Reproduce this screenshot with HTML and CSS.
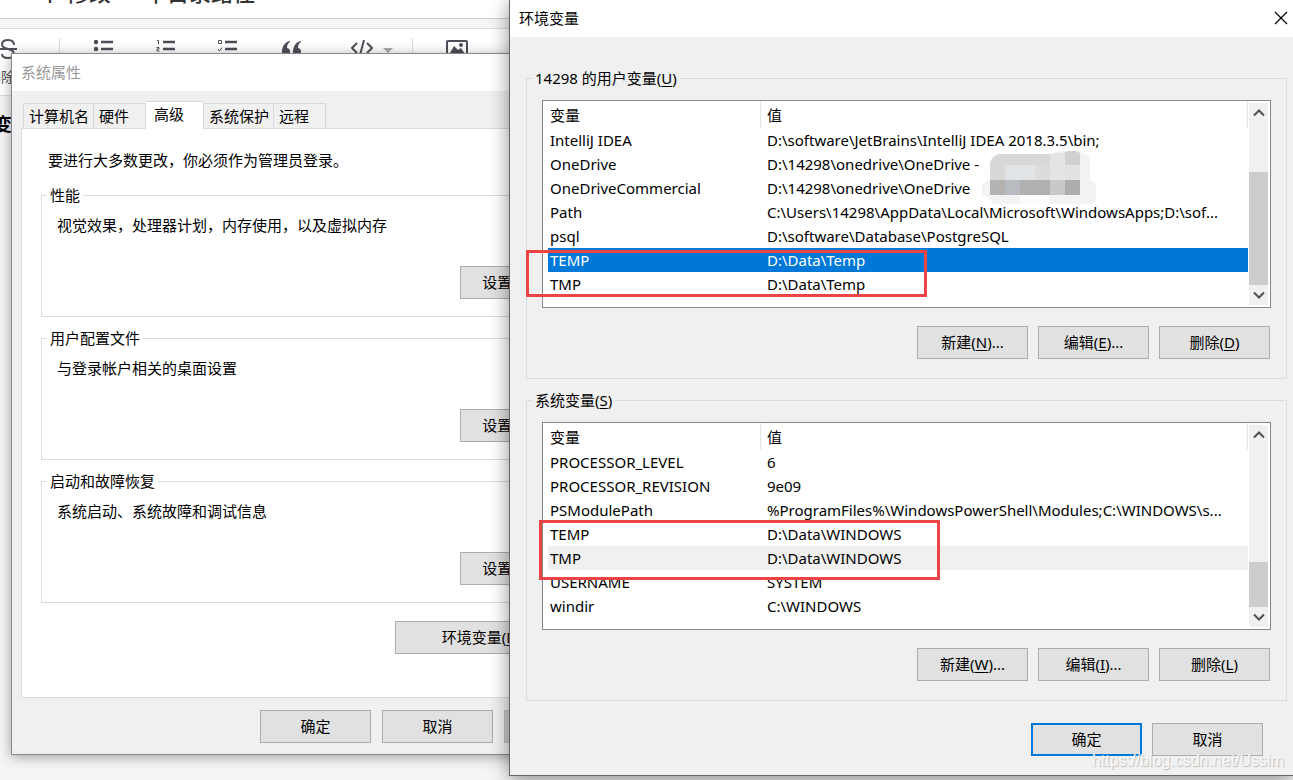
FILE: index.html
```html
<!DOCTYPE html>
<html lang="zh-CN">
<head>
  <meta charset="UTF-8">
  <meta name="viewport" content="width=device-width, initial-scale=1">
  <title>环境变量</title>
  <link rel="stylesheet" href="styles.css">
</head>
<body>
  <div class="editor">
    <div class="editor-title"><h1>个 修改 &nbsp; &nbsp; &nbsp;中目录路径</h1></div>
    <div class="toolbar">
      <button class="tool tool-first">
        <svg width="22" height="22" viewBox="0 0 22 22" fill="none" stroke="#4f4f5a" stroke-width="2"><path d="M17 6c0-3-2-5-6-5S5 3 5 5.500s2 3.500 6 4.500 6 2.500 6 5-2 4-6 4-6-1-6-4M2 10h18"/></svg>
        <span>删除线</span>
      </button>
      <i class="tool-line"></i>
      <button class="tool" aria-label="无序列表">
        <svg width="22" height="22" viewBox="0 0 22 22" stroke="#4f4f5a" stroke-width="2"><path d="M8 3h12M8 10h12M8 17h12" stroke-width="2.500"/><circle cx="3" cy="3" r="1.200"/><circle cx="3" cy="10" r="1.200"/><circle cx="3" cy="17" r="1.200"/></svg>
      </button>
      <button class="tool" aria-label="有序列表">
        <svg width="22" height="22" viewBox="0 0 22 22" fill="none" stroke="#4f4f5a"><path d="M8 3h12M8 10h12M8 17h12" stroke-width="2.500"/><path d="M2 1.500h1.500V5M1.500 8.500h2.500v1.500H2v2h2.500"/></svg>
      </button>
      <button class="tool" aria-label="待办">
        <svg width="22" height="22" viewBox="0 0 22 22" fill="none" stroke="#4f4f5a"><path d="M8 3h12M8 10h12M8 17h12" stroke-width="2.500"/><path d="M1.500 1.500h3v3h-3zM1 10l1.500 2L5 8.500"/></svg>
      </button>
      <button class="tool tool-wide" aria-label="引用">
        <svg width="22" height="22" viewBox="0 0 22 22" fill="#4f4f5a"><path d="M9 2C4 3 1 7 1 13a4 4 0 1 0 5-4C6 6 7 4 9 3zM20 2c-5 1-8 5-8 11a4 4 0 1 0 5-4c0-3 1-5 3-6z"/></svg>
      </button>
      <button class="tool tool-code" aria-label="代码段">
        <svg width="22" height="22" viewBox="0 0 22 22" fill="none" stroke="#4f4f5a" stroke-width="2"><path d="M6 4L1 9l5 5M16 4l5 5-5 5M13 1L9 16"/></svg>
        <svg width="10" height="22" viewBox="0 0 10 22" fill="#aaa"><path d="M0 9h10l-5 5z"/></svg>
      </button>
      <i class="tool-line"></i>
      <button class="tool tool-wide tool-image" aria-label="图片">
        <svg width="22" height="22" viewBox="0 0 22 22" fill="none" stroke="#4f4f5a" stroke-width="2"><rect x="1" y="2" width="20" height="17" rx="1"/><path d="M4 14l4-7 4 4 3-2 4 6H4z" fill="#4f4f5a" stroke="none"/><circle cx="15" cy="6" r="1"/></svg>
      </button>
    </div>
    <p class="editor-heading">变</p>
  </div>

  <!-- 系统属性 -->
  <div class="window sys-window">
    <div class="title-bar">系统属性</div>
    <div class="sys-body">
      <div class="tabs">
        <button class="tab">计算机名</button>
        <button class="tab">硬件</button>
        <button class="tab active">高级</button>
        <button class="tab">系统保护</button>
        <button class="tab">远程</button>
      </div>
      <div class="tab-page">
        <p class="notice">要进行大多数更改，你必须作为管理员登录。</p>
        <fieldset class="group">
          <legend>性能</legend>
          <p>视觉效果，处理器计划，内存使用，以及虚拟内存</p>
          <button class="btn">设置(<u>S</u>)...</button>
        </fieldset>
        <fieldset class="group">
          <legend>用户配置文件</legend>
          <p>与登录帐户相关的桌面设置</p>
          <button class="btn">设置(<u>E</u>)...</button>
        </fieldset>
        <fieldset class="group">
          <legend>启动和故障恢复</legend>
          <p>系统启动、系统故障和调试信息</p>
          <button class="btn">设置(<u>T</u>)...</button>
        </fieldset>
        <button class="btn btn-env">环境变量(<u>N</u>)...</button>
      </div>
      <div class="sys-footer">
        <button class="btn">确定</button>
        <button class="btn">取消</button>
        <button class="btn" disabled>应用(<u>A</u>)</button>
      </div>
    </div>
  </div>

  <!-- 环境变量 -->
  <div class="window env-window">
    <div class="title-bar">
      <span>环境变量</span>
      <button class="close" aria-label="关闭">
        <svg width="14" height="14" viewBox="0 0 14 14" stroke="#000" stroke-width="1.200"><path d="M1 1l12 12M13 1L1 13"/></svg>
      </button>
    </div>
    <div class="env-body">
      <fieldset class="group var-group">
        <legend>14298 的用户变量(<u>U</u>)</legend>
        <div class="list">
          <table>
            <thead>
              <tr><th class="name">变量</th><th>值</th></tr>
            </thead>
            <tbody>
              <tr><td>IntelliJ IDEA</td><td>D:\software\JetBrains\IntelliJ IDEA 2018.3.5\bin;</td></tr>
              <tr><td>OneDrive</td><td>D:\14298\onedrive\OneDrive -</td></tr>
              <tr><td>OneDriveCommercial</td><td>D:\14298\onedrive\OneDrive</td></tr>
              <tr><td>Path</td><td>C:\Users\14298\AppData\Local\Microsoft\WindowsApps;D:\sof...</td></tr>
              <tr><td>psql</td><td>D:\software\Database\PostgreSQL</td></tr>
              <tr class="selected"><td>TEMP</td><td>D:\Data\Temp</td></tr>
              <tr><td>TMP</td><td>D:\Data\Temp</td></tr>
            </tbody>
          </table>
          <div class="scrollbar">
            <button aria-label="向上"><svg width="12" height="8" viewBox="0 0 12 8" fill="none" stroke="#505050" stroke-width="2"><path d="M1 6.500l5-5 5 5"/></svg></button>
            <div class="thumb thumb-long"></div>
            <button aria-label="向下"><svg width="12" height="8" viewBox="0 0 12 8" fill="none" stroke="#505050" stroke-width="2"><path d="M1 1.500l5 5 5-5"/></svg></button>
          </div>
          <svg class="mosaic" width="114" height="54" viewBox="0 0 114 54">
            <path d="M8 12q2-9 12-9h48l10-3h20l10 6v23l6 4v17l-4 3H16q-8 0-8-6L0 43V33l8-4z" fill="#f3f3f4"/>
            <path d="M8 12q2-9 12-9h48v11H23v15H8z" fill="#d8d8d8"/>
            <path d="M23 14h30v15H23z" fill="#e1e4e7"/>
            <path d="M53 14h15v15H53z" fill="#dcdcdd"/>
            <path d="M68 3l15-2v28H68z" fill="#e3e4e5"/>
            <path d="M83 1q8-3 15 1v12H83z" fill="#d0d0d0"/>
            <path d="M83 14h15v15H83z" fill="#e0e2e3"/>
            <path d="M8 29h15v15H8z" fill="#b5b3b2"/>
            <path d="M23 29h15v15H23z" fill="#b8bcc1"/>
            <path d="M38 29h30v15H38z" fill="#b0b0b0"/>
            <path d="M68 29h15v15H68z" fill="#c9c9c9"/>
            <path d="M83 29h15v15H83z" fill="#adadad"/>
            <path d="M38 44h30v10H38z" fill="#fdfdfd"/>
          </svg>
          <div class="mark mark-user"></div>
        </div>
        <div class="actions">
          <button class="btn">新建(<u>N</u>)...</button>
          <button class="btn">编辑(<u>E</u>)...</button>
          <button class="btn">删除(<u>D</u>)</button>
        </div>
      </fieldset>

      <fieldset class="group var-group">
        <legend>系统变量(<u>S</u>)</legend>
        <div class="list">
          <table>
            <thead>
              <tr><th class="name">变量</th><th>值</th></tr>
            </thead>
            <tbody>
              <tr><td>PROCESSOR_LEVEL</td><td>6</td></tr>
              <tr><td>PROCESSOR_REVISION</td><td>9e09</td></tr>
              <tr><td>PSModulePath</td><td>%ProgramFiles%\WindowsPowerShell\Modules;C:\WINDOWS\s...</td></tr>
              <tr><td>TEMP</td><td>D:\Data\WINDOWS</td></tr>
              <tr class="inactive"><td>TMP</td><td>D:\Data\WINDOWS</td></tr>
              <tr><td>USERNAME</td><td>SYSTEM</td></tr>
              <tr><td>windir</td><td>C:\WINDOWS</td></tr>
            </tbody>
          </table>
          <div class="scrollbar">
            <button aria-label="向上"><svg width="12" height="8" viewBox="0 0 12 8" fill="none" stroke="#505050" stroke-width="2"><path d="M1 6.500l5-5 5 5"/></svg></button>
            <div class="thumb thumb-short"></div>
            <button aria-label="向下"><svg width="12" height="8" viewBox="0 0 12 8" fill="none" stroke="#505050" stroke-width="2"><path d="M1 1.500l5 5 5-5"/></svg></button>
          </div>
          <div class="mark mark-system"></div>
        </div>
        <div class="actions">
          <button class="btn">新建(<u>W</u>)...</button>
          <button class="btn">编辑(<u>I</u>)...</button>
          <button class="btn">删除(<u>L</u>)</button>
        </div>
      </fieldset>

      <div class="env-footer">
        <button class="btn btn-default">确定</button>
        <button class="btn">取消</button>
      </div>
    </div>
    <div class="watermark">https://blog.csdn.net/Ussim</div>
  </div>
</body>
</html>
```
FILE: styles.css
```css
* {
  box-sizing: border-box;
}
body {
  margin: 0;
  min-height: 100vh;
  position: relative;
  overflow: hidden;
  background: #f5f5f5;
  color: #000;
  font-family: "Noto Sans", "Noto Sans CJK SC", sans-serif;
  font-size: 15px;
  line-height: 20px;
}
h1, p {
  margin: 0;
}
button {
  font: inherit;
  color: inherit;
  padding: 0;
  border: none;
  background: none;
  white-space: nowrap;
}
u {
  text-underline-offset: 2px;
}

/* 编辑器 */
.editor-title {
  display: flex;
  align-items: flex-end;
  height: 19px;
  padding: 0 0 13px 39px;
  background: #fff;
  border-bottom: 1px solid #ccc;
}
.editor-title h1 {
  font-size: 22px;
  font-weight: 500;
  line-height: 26px;
  color: #333;
}
.toolbar {
  display: flex;
  height: 68px;
  margin-top: 9px;
  padding-top: 9px;
  background: #fff;
  border-top: 1px solid #ddd;
  border-bottom: 1px solid #ddd;
}
.tool {
  display: flex;
  flex-direction: column;
  align-items: center;
  flex: none;
  width: 62px;
  padding-top: 1px;
  font-size: 14px;
  color: #4f4f5a;
}
.tool-first {
  margin-left: -23px;
}
.tool-first span {
  margin-top: 6px;
}
.tool-wide {
  width: 66px;
}
.tool-code {
  flex-direction: row;
  align-items: flex-start;
  gap: 10px;
  width: 86px;
  padding-left: 26px;
}
.tool-line {
  width: 1px;
  height: 40px;
  margin: 0 13px 0 20px;
  background: #ddd;
}
.tool-code + .tool-line {
  margin: 0 11px 0 1px;
}
.editor-heading {
  margin: 18px 0 0 -6px;
  font-size: 18px;
  font-weight: bold;
}

/* 窗口 */
.window {
  position: absolute;
  background: #f0f0f0;
  border: 1px solid #8a8a8a;
}
.title-bar {
  display: flex;
  align-items: center;
  justify-content: space-between;
  height: 37px;
  padding: 0 5px 2px 9px;
  background: #fff;
}
.sys-window {
  left: 11px;
  top: 53px;
  width: 614px;
  box-shadow: 0 2px 12px rgba(0, 0, 0, .35);
}
.sys-window .title-bar {
  color: #999;
}
.env-window {
  left: 509px;
  right: 0;
  top: 0;
  border-color: #666;
  border-top: none;
  border-right: none;
  box-shadow: 0 3px 18px rgba(0, 0, 0, .45);
}
.close {
  display: flex;
}

/* 按钮和分组 */
.btn {
  width: 111px;
  height: 33px;
  padding-bottom: 2px;
  border: 1px solid #adadad;
  background: #e1e1e1;
}
.btn:disabled {
  color: #838383;
  background: #ccc;
  border-color: #bfbfbf;
}
.btn-default {
  border: 2px solid #0078d7;
}
.group {
  min-width: 0;
  margin: 0;
  padding: 0 15px;
  border: 1px solid #dcdcdc;
}
.group legend {
  margin-left: -10px;
  padding: 0 3px;
}

/* 系统属性 */
.sys-body {
  padding: 10px 9px 11px;
}
.tabs {
  display: flex;
  align-items: flex-end;
  height: 27px;
  padding-left: 2px;
}
.tab {
  min-width: 52px;
  height: 25px;
  padding: 0 4px 0 5px;
  text-align: left;
  border: 1px solid #d9d9d9;
  border-width: 1px 1px 0 0;
}
.tab:first-child {
  border-left-width: 1px;
}
.tab.active {
  position: relative;
  min-width: 58px;
  height: 28px;
  margin-bottom: -1px;
  padding: 0 8px 4px;
  background: #fff;
}
.tab-page {
  padding: 21px 19px 43px;
  background: #fff;
  border: 1px solid #dcdcdc;
}
.notice {
  margin: 0 0 15px 7px;
}
.tab-page .group {
  display: flow-root;
  margin-bottom: 11px;
  padding-bottom: 17px;
}
.tab-page .group p {
  margin-top: 10px;
}
.tab-page .group .btn {
  display: block;
  width: 104px;
  margin: 31px 15px 0 auto;
}
.tab-page .btn-env {
  display: block;
  width: 186px;
  margin: 18px 14px 0 auto;
}
.sys-footer {
  display: flex;
  justify-content: flex-end;
  gap: 11px;
  margin-top: 12px;
}

/* 环境变量 */
.env-body {
  padding: 31px 6px 19px 16px;
}
.var-group {
  margin-bottom: 11px;
  padding-bottom: 19px;
}
.list {
  position: relative;
  display: flex;
  height: 208px;
  margin-top: 12px;
  padding: 0 2px 0 5px;
  background: #fff;
  border: 1px solid #828790;
}
table {
  flex: 1;
  min-width: 0;
  height: max-content;
  border-collapse: separate;
  border-spacing: 0;
  table-layout: fixed;
}
th, td {
  height: 24px;
  padding: 0 0 0 6px;
  text-align: left;
  white-space: nowrap;
  overflow: hidden;
}
th {
  height: 27px;
  font-weight: normal;
  border-right: 1px solid #e5e5e5;
}
th:first-child, td:first-child {
  padding-left: 2px;
}
th.name {
  width: 213px;
}
td {
  line-height: 24px;
}
.selected td {
  color: #fff;
  background: #0078d7;
}
.inactive td {
  background: #f0f0f0;
}
.scrollbar {
  display: flex;
  flex-direction: column;
  width: 19px;
  margin: 2px 0 2px 1px;
  background: #f0f0f0;
}
.scrollbar button {
  display: flex;
  align-items: center;
  justify-content: center;
  height: 20px;
}
.thumb {
  margin-top: auto;
  background: #cdcdcd;
}
.thumb-long {
  height: 113px;
}
.thumb-short {
  height: 45px;
}
.mosaic {
  position: absolute;
  left: 439px;
  top: 50px;
}
.mark {
  position: absolute;
  border: 3px solid #ec4444;
}
.mark-user {
  left: -17px;
  top: 149px;
  width: 401px;
  height: 47px;
}
.mark-system {
  left: -4px;
  top: 97px;
  width: 401px;
  height: 60px;
}
.actions, .env-footer {
  display: flex;
  justify-content: flex-end;
  gap: 10px;
}
.actions {
  margin-top: 18px;
  padding-right: 1px;
}
.env-footer {
  margin-top: 22px;
  padding-right: 24px;
}
.watermark {
  position: absolute;
  right: 9px;
  bottom: 4px;
  font-family: "Liberation Sans", sans-serif;
  font-size: 16px;
  color: #f8f8f8;
  text-shadow: 1px 1px 1px #bbb;
}
```
